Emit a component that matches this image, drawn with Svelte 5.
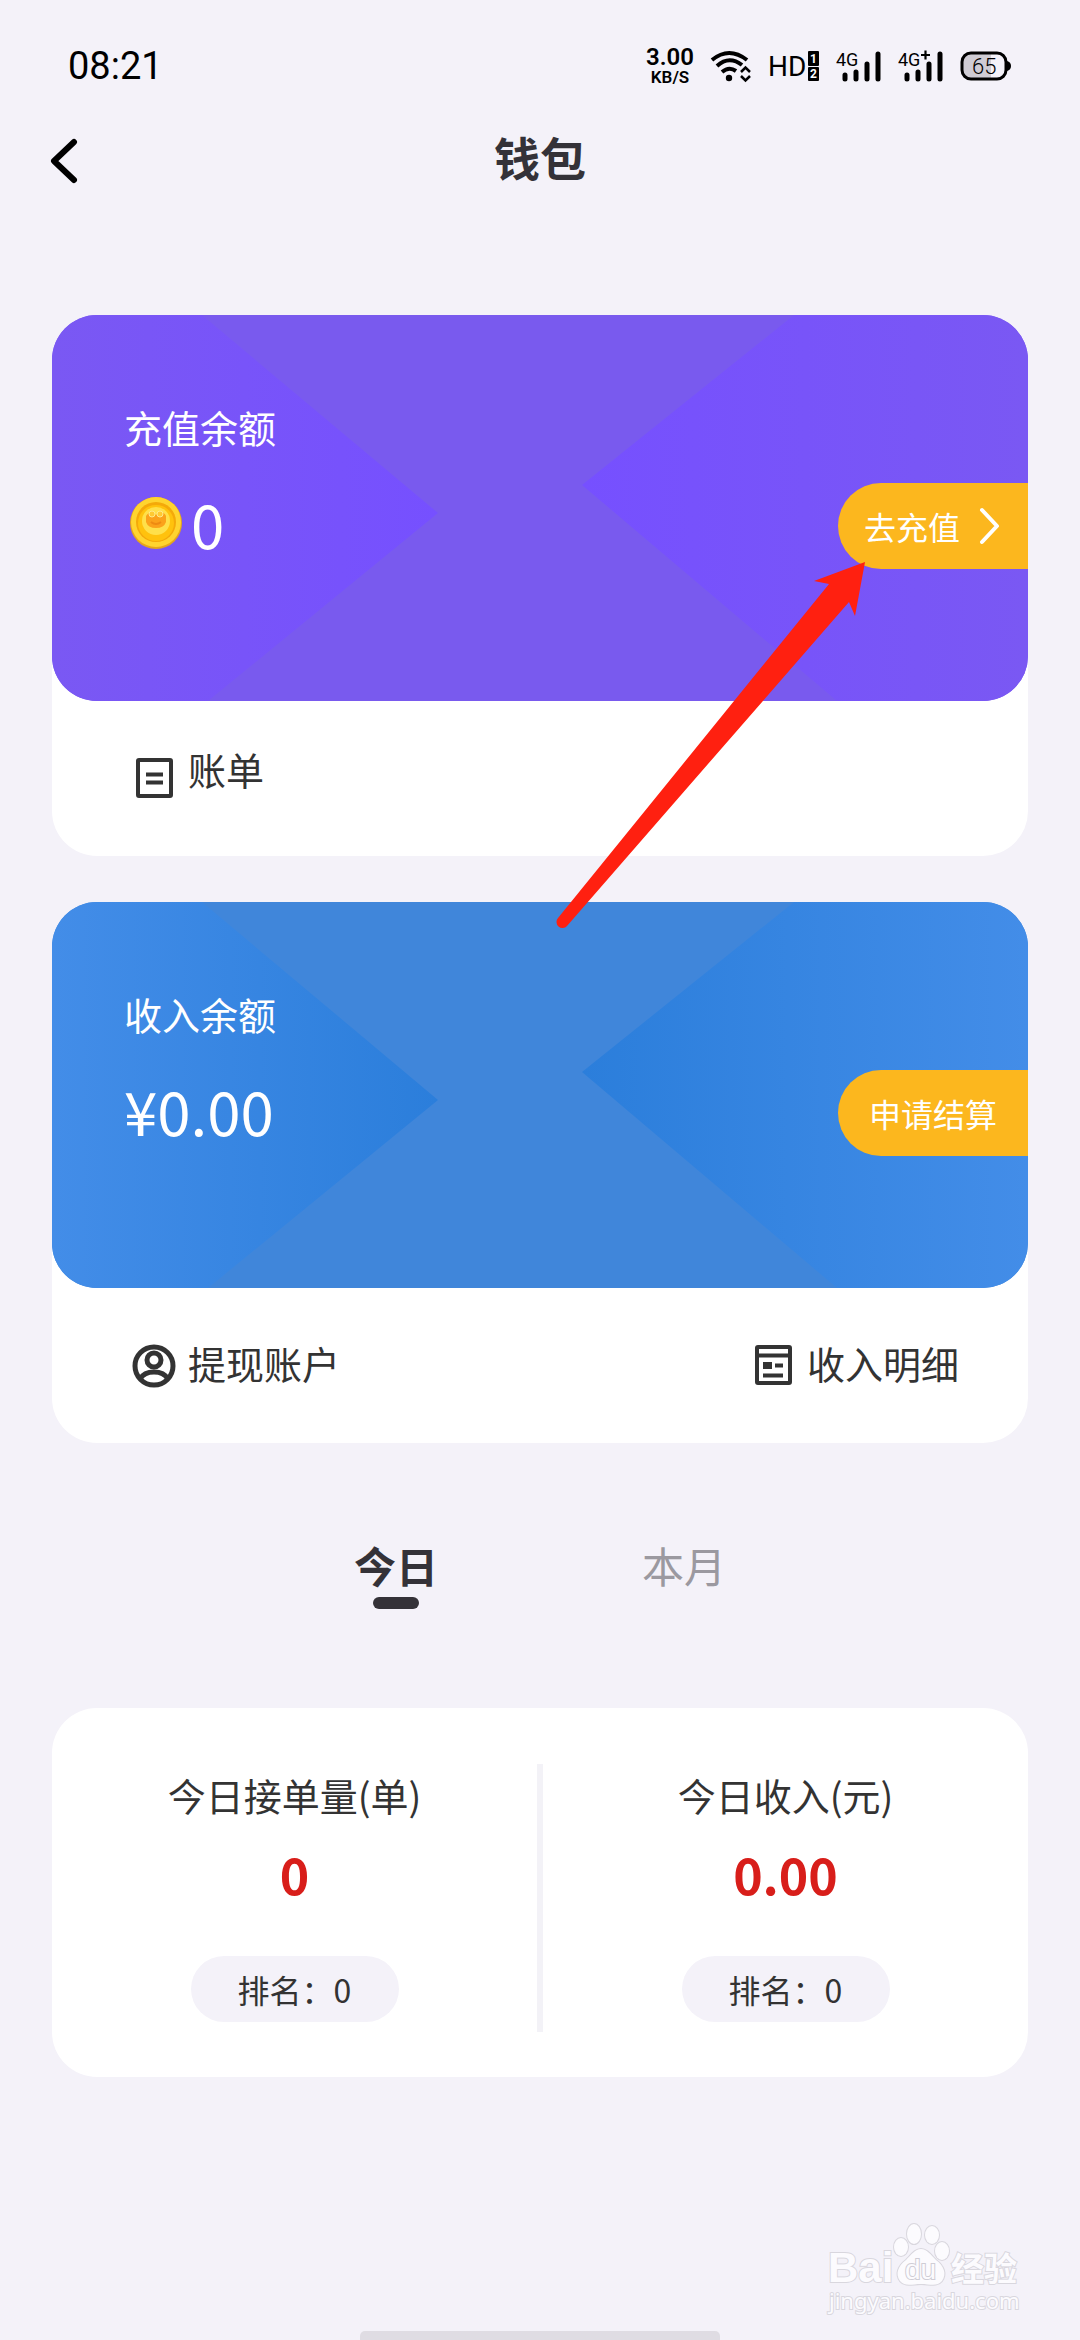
<script>
  let activeTab = $state('today');

  const tabs = [
    { id: 'today', label: '今日' },
    { id: 'month', label: '本月' }
  ];

  const wallet = {
    coins: '0',
    income: '¥0.00'
  };

  const stats = [
    { label: '今日接单量(单)', value: '0', rank: 0 },
    { label: '今日收入(元)', value: '0.00', rank: 0 }
  ];
</script>

{#snippet pattern(id)}
  <svg class="pattern" viewBox="0 0 976 386" preserveAspectRatio="none" aria-hidden="true">
    <defs>
      <linearGradient id="{id}-left">
        <stop offset="0" class="edge" />
        <stop offset="1" class="tip" />
      </linearGradient>
      <linearGradient id="{id}-right">
        <stop offset="0" class="tip" />
        <stop offset="1" class="edge" />
      </linearGradient>
    </defs>
    <path d="M0 0H150L386 198L156 386H0Z" fill="url(#{id}-left)" />
    <path d="M976 0H742L530 170L785 386H976Z" fill="url(#{id}-right)" />
  </svg>
{/snippet}

{#snippet signal(plus)}
  <svg class="signal" viewBox="0 0 46 34" aria-hidden="true">
    <text x="0" y="17" font-size="18">4G</text>
    {#if plus}
      <path d="M23 6H32M27.5 1.500V10.500" stroke="#000" stroke-width="2.200" />
    {/if}
    <path d="M9 26V30M20 23V30M31 15V30M42 5V30" stroke="#000" stroke-width="5" stroke-linecap="round" />
  </svg>
{/snippet}

<div class="page">
  <div class="status-bar">
    <span class="time">08:21</span>
    <div class="status-icons">
      <div class="speed">
        <span class="speed-value">3.00</span>
        <span class="speed-unit">KB/S</span>
      </div>
      <svg class="wifi" viewBox="0 0 42 34" aria-hidden="true">
        <g fill="none" stroke="#000" stroke-width="4">
          <path d="M2 11Q19 -3 37 11" />
          <path d="M7 17Q19 6 32 16" />
          <path d="M12 23Q19 17 26 22" />
        </g>
        <circle cx="19" cy="29" r="3.200" />
        <path d="M31 23L35.500 18.500L40 23M31 27L35.500 31.500L40 27" fill="none" stroke="#000" stroke-width="2.500" />
      </svg>
      <svg class="hd" viewBox="0 0 52 34" aria-hidden="true">
        <text x="0" y="27" font-size="28">HD</text>
        <rect x="40" y="2" width="11" height="15" rx="1" />
        <rect x="40" y="18" width="11" height="14" rx="1" />
        <text class="sim" x="42" y="14" font-size="12">1</text>
        <text class="sim" x="42" y="29" font-size="12">2</text>
      </svg>
      {@render signal(false)}
      {@render signal(true)}
      <svg class="battery" viewBox="0 0 52 30" aria-hidden="true">
        <path d="M9 3H31V27H9Q3 27 3 20V10Q3 3 9 3Z" fill="#cfccd4" />
        <rect x="2" y="2" width="44" height="26" rx="9" fill="none" stroke="#000" stroke-width="3" />
        <path d="M47 10q4 1 4 5t-4 5z" />
        <text x="12" y="23" font-size="22" font-weight="300">65</text>
      </svg>
    </div>
  </div>

  <header class="header">
    <button class="back" aria-label="返回">
      <svg viewBox="0 0 28 48" aria-hidden="true">
        <path d="M24 5L4 24L24 43" fill="none" stroke="#000" stroke-width="6" stroke-linecap="round" stroke-linejoin="round" />
      </svg>
    </button>
    <h1>钱包</h1>
  </header>

  <main>
    <section class="card">
      <div class="balance recharge">
        {@render pattern('recharge')}
        <div class="balance-info">
          <span class="balance-label">充值余额</span>
          <span class="balance-value">
            <svg class="coin" viewBox="0 0 54 54" aria-hidden="true">
              <circle cx="27" cy="27" r="26" fill="#e5a51c" />
              <circle cx="27" cy="26" r="25" fill="#ffd42f" />
              <circle cx="27" cy="26" r="20" fill="#f4a90a" />
              <circle cx="27" cy="27" r="18" fill="#ffc20d" />
              <circle cx="27" cy="25" r="14" fill="#ffe04a" />
              <path d="M17 20q3 -5 7 -3q3 3 6 0q5 -2 7 3v6q-2 6 -10 6t-10 -6z" fill="#fba21b" />
              <circle cx="23" cy="18" r="3" fill="#ffc933" stroke="#ffe98a" />
              <circle cx="31" cy="18" r="3" fill="#ffc933" stroke="#ffe98a" />
              <path d="M22 26q5 4 10 0" fill="none" stroke="#ee8a12" stroke-width="2" />
            </svg>
            {wallet.coins}
          </span>
        </div>
        <button class="action">
          去充值
          <svg class="chevron" viewBox="0 0 24 40" aria-hidden="true">
            <path d="M4 4L19 20L4 36" fill="none" stroke="#fff" stroke-width="4" stroke-linecap="round" stroke-linejoin="round" />
          </svg>
        </button>
      </div>
      <nav class="links">
        <a class="link raised" href="#bill">
          <svg viewBox="0 0 44 44" aria-hidden="true">
            <rect x="6" y="3" width="33" height="36" rx="1" fill="none" stroke="#333" stroke-width="4" />
            <path d="M14 17.500H31M14 25.500H31" stroke="#333" stroke-width="4" />
          </svg>
          <span>账单</span>
        </a>
      </nav>

      <svg class="arrow" viewBox="0 0 320 376" aria-hidden="true">
        <path d="M315 2L264 21L279 24L8 358A6 6 0 0 0 17 366L299 42L305 56Z" fill="#ff2010" />
      </svg>
    </section>

    <section class="card">
      <div class="balance income">
        {@render pattern('income')}
        <div class="balance-info">
          <span class="balance-label">收入余额</span>
          <span class="balance-value">{wallet.income}</span>
        </div>
        <button class="action">申请结算</button>
      </div>
      <nav class="links">
        <a class="link" href="#account">
          <svg viewBox="0 0 44 44" fill="none" stroke="#333" stroke-width="5" aria-hidden="true">
            <circle cx="22" cy="22" r="19" />
            <circle cx="22" cy="16" r="7" />
            <path d="M8 35Q12 28 22 28T36 35" />
          </svg>
          <span>提现账户</span>
        </a>
        <a class="link" href="#details">
          <svg viewBox="0 0 44 44" aria-hidden="true">
            <rect x="6" y="3" width="33" height="36" rx="1" fill="none" stroke="#333" stroke-width="4" />
            <path d="M6 11.500H39M24 21.500H32M12 31.500H32" stroke="#333" stroke-width="4" />
            <rect x="12" y="18" width="9" height="7" fill="#333" />
          </svg>
          <span>收入明细</span>
        </a>
      </nav>
    </section>

    <div class="tabs" role="tablist">
      {#each tabs as tab (tab.id)}
        <button
          class="tab"
          class:active={activeTab === tab.id}
          role="tab"
          aria-selected={activeTab === tab.id}
          onclick={() => (activeTab = tab.id)}
        >
          {tab.label}
        </button>
      {/each}
    </div>

    <section class="stats">
      {#each stats as stat (stat.label)}
        <div class="stat">
          <span class="stat-label">{stat.label}</span>
          <span class="stat-value">{stat.value}</span>
          <span class="stat-rank">排名：{stat.rank}</span>
        </div>
      {/each}
    </section>
  </main>

  <footer>
    <svg class="watermark" viewBox="0 0 200 98" aria-hidden="true">
      <g class="mark">
        <text x="2" y="61" font-size="42" font-weight="700">Bai</text>
        <ellipse cx="75" cy="26" rx="7" ry="9" />
        <ellipse cx="88" cy="13" rx="7" ry="10" />
        <ellipse cx="106" cy="14" rx="7" ry="9" />
        <ellipse cx="116" cy="30" rx="7" ry="9" />
        <path d="M95 28C101 28 105 34 110 39C118 45 121 53 116 60C111 66 104 63 95 63S79 66 74 60C69 53 72 45 80 39C85 34 89 28 95 28Z" />
        <text class="du" x="79" y="58" font-size="28">du</text>
        <text class="cn" x="125" y="60" font-size="33" font-weight="700">经验</text>
        <text class="url" x="3" y="88" font-size="22">jingyan.baidu.com</text>
      </g>
    </svg>
    <div class="home-bar"></div>
  </footer>
</div>

<style>
  :global(body) {
    background: #f4f2f9;
  }

  .page {
    min-height: 100vh;
    display: flex;
    flex-direction: column;
    background: #f4f2f9;
    color: #333;
    font-family: 'Noto Sans CJK SC', sans-serif;
    font-weight: 400;
  }

  button {
    padding: 0;
    border: none;
    background: none;
    color: inherit;
    font: inherit;
    cursor: pointer;
  }

  .status-bar {
    display: flex;
    justify-content: space-between;
    align-items: center;
    height: 40px;
    padding: 46px 68px 40px;
    color: #000;
    font-family: Roboto, sans-serif;
  }

  .time {
    font-size: 38px;
    line-height: 40px;
  }

  .status-icons {
    display: flex;
    align-items: center;
    gap: 16px;
  }

  .speed {
    display: flex;
    flex-direction: column;
    align-items: center;
    font-weight: 600;
  }

  .speed-value {
    font-size: 24px;
    line-height: 22px;
  }

  .speed-unit {
    font-size: 17px;
    line-height: 18px;
  }

  .wifi {
    width: 42px;
    height: 34px;
  }

  .hd {
    width: 52px;
    height: 34px;
  }

  .sim {
    fill: #fff;
    font-weight: 700;
  }

  .signal {
    width: 46px;
    height: 34px;
  }

  .battery {
    width: 52px;
    height: 30px;
  }

  .header {
    display: grid;
    grid-template-columns: 60px 1fr 60px;
    align-items: center;
    height: 60px;
    padding: 0 50px;
  }

  .back {
    display: flex;
    padding-top: 10px;
  }

  .back svg {
    width: 28px;
    height: 48px;
  }

  h1 {
    margin: 0;
    color: #343238;
    font-size: 46px;
    font-weight: 700;
    line-height: 60px;
    text-align: center;
  }

  main {
    display: flex;
    flex-direction: column;
    gap: 46px;
    padding: 129px 52px 0;
  }

  .card {
    position: relative;
    background: #fff;
    border-radius: 45px;
  }

  .balance {
    position: relative;
    display: flex;
    justify-content: space-between;
    align-items: flex-start;
    height: 386px;
    border-radius: 45px;
    overflow: hidden;
    color: #fff;
  }

  .recharge {
    --edge: #7a58f3;
    --tip: #7650ff;
    background: #795aee;
  }

  .income {
    --edge: #438de8;
    --tip: #2b7edb;
    background: #4086da;
  }

  .pattern {
    position: absolute;
    inset: 0;
    width: 100%;
    height: 100%;
  }

  .edge {
    stop-color: var(--edge);
  }

  .tip {
    stop-color: var(--tip);
  }

  .balance-info {
    position: relative;
    display: flex;
    flex-direction: column;
    gap: 36px;
    padding: 92px 0 0 72px;
  }

  .balance-label {
    font-size: 38px;
    line-height: 40px;
  }

  .balance-value {
    display: flex;
    align-items: center;
    gap: 8px;
    font-size: 60px;
    line-height: 80px;
  }

  .coin {
    width: 54px;
    height: 54px;
    margin-left: 5px;
  }

  .action {
    position: relative;
    display: flex;
    justify-content: center;
    align-items: center;
    gap: 18px;
    width: 190px;
    height: 86px;
    margin-top: 168px;
    border-radius: 43px 0 0 43px;
    background: #fcb71e;
    color: #fff;
    font-size: 32px;
  }

  .chevron {
    width: 24px;
    height: 40px;
  }

  .links {
    display: flex;
    justify-content: space-between;
    align-items: center;
    height: 155px;
    padding: 0 69px 0 80px;
  }

  .link {
    display: flex;
    align-items: center;
    gap: 12px;
    color: #333;
    font-size: 38px;
    text-decoration: none;
  }

  .link.raised {
    align-items: flex-start;
  }

  .link span {
    padding-bottom: 6px;
    line-height: 24px;
  }

  .link svg {
    width: 44px;
    height: 44px;
  }

  /* points at the recharge button */
  .arrow {
    position: absolute;
    top: 245px;
    right: 158px;
    width: 320px;
    height: 376px;
    z-index: 1;
    pointer-events: none;
  }

  .tabs {
    display: flex;
    justify-content: center;
    padding: 46px 0 53px;
  }

  .tab {
    display: flex;
    flex-direction: column;
    align-items: center;
    gap: 2px;
    width: 288px;
    color: #9b99a0;
    font-size: 42px;
    line-height: 60px;
  }

  .tab::after {
    content: '';
    width: 46px;
    height: 12px;
    border-radius: 6px;
  }

  .tab.active {
    color: #343238;
    font-weight: 700;
  }

  .tab.active::after {
    background: #343238;
  }

  .stats {
    display: flex;
    padding: 56px 0 45px;
    border-radius: 45px;
    background: #fff;
  }

  .stat {
    flex: 1;
    display: flex;
    flex-direction: column;
    align-items: center;
    padding: 11px 0 10px;
  }

  .stat + .stat {
    border-left: 6px solid #f3f2f7;
  }

  .stat-label {
    font-size: 38px;
    line-height: 40px;
  }

  .stat-value {
    margin: 18px 0 43px;
    color: #d81e1a;
    font-size: 50px;
    font-weight: 700;
    line-height: 80px;
  }

  .stat-rank {
    width: 208px;
    border-radius: 33px;
    background: #f4f2f9;
    font-size: 32px;
    line-height: 66px;
    text-align: center;
  }

  footer {
    display: flex;
    flex-direction: column;
    align-items: center;
    gap: 12px;
    margin-top: auto;
  }

  .watermark {
    align-self: flex-end;
    width: 200px;
    height: 98px;
    margin-right: 54px;
  }

  .mark {
    fill: #fcfbfe;
    stroke: #d9d7de;
    stroke-width: 2;
    paint-order: stroke;
    font-family: 'Liberation Sans', sans-serif;
  }

  .du {
    fill: #fcfbfe;
    stroke: #cfcdd5;
  }

  .cn {
    font-family: 'Noto Sans CJK SC', sans-serif;
  }

  .url {
    font-family: 'Noto Sans', sans-serif;
  }

  .home-bar {
    width: 360px;
    height: 9px;
    border-radius: 5px 5px 0 0;
    background: #dfdce3;
  }
</style>
